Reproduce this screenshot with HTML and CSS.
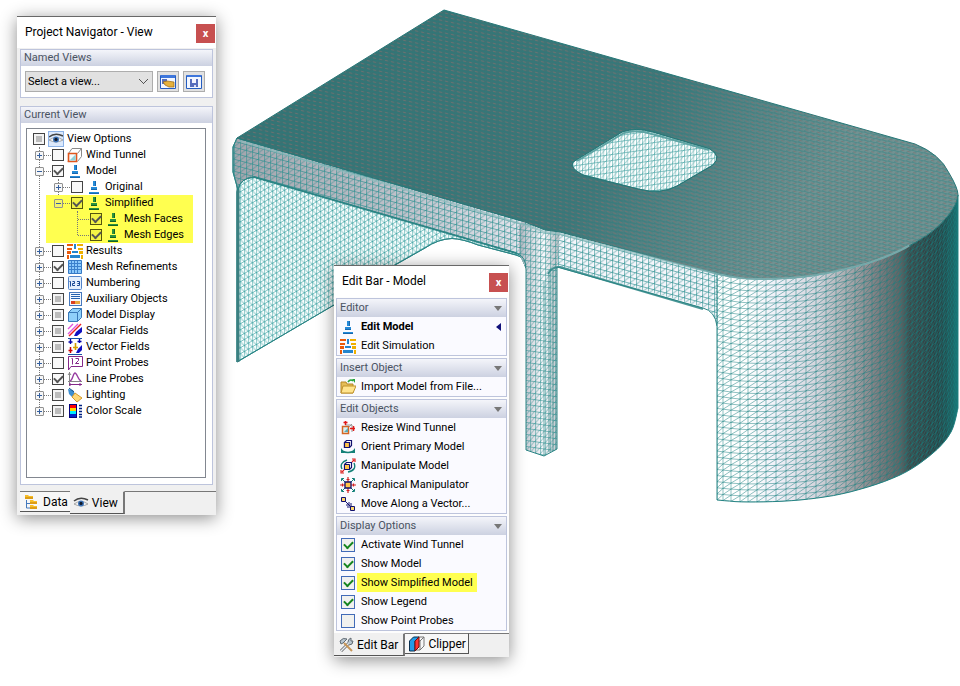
FILE: index.html
```html
<!DOCTYPE html>
<html lang="en">
<head>
<meta charset="utf-8">
<title>Simplified Model View</title>
<link rel="stylesheet" href="styles.css">
</head>
<body>
<svg width="0" height="0" class="sprite" aria-hidden="true">
  <symbol id="eye" viewBox="0 0 16 16"><path d="M1 6Q7 1 15 5" stroke="#444" stroke-width="1.600" fill="none"/><path d="M1 9Q8 4 15 9Q8 13 1 9Z" fill="#f2f2f2" stroke="#888" stroke-width=".7"/><circle cx="8" cy="8.600" r="3" fill="#3c73b8"/><circle cx="8" cy="8.400" r="1.600" fill="#101828"/></symbol>
  <symbol id="tunnel" viewBox="0 0 16 16"><path d="M5 1.500h9.500v8l-4 5M5 10.500l-4 4M10.500 6.500l4-5M1.500 6.500L5 1.500" fill="none" stroke="#8a8a8a"/><path d="M1.500 6.500h8v8h-8z" fill="#f4fbfc" stroke="#e0561c" stroke-width="1.600"/><path d="M2.500 13.500l6-6v6z" fill="#8ed0d8"/></symbol>
  <symbol id="model" viewBox="0 0 16 16"><path d="M7 2h2v5H7zM5 8h6v3H5zM3 13h10v2H3z" fill="#258bd8"/><path d="M9 2h1v5H9zM5 10h6v1H5zM3 14h10v1H3z" fill="#1767ae"/></symbol>
  <symbol id="mesh" viewBox="0 0 16 16"><path d="M7 2h2v5H7zM5 8h6v3H5zM3 13h10v2H3z" fill="#2a913d"/><path d="M9 2h1v5H9zM5 10h6v1H5zM3 14h10v1H3z" fill="#146125"/></symbol>
  <symbol id="results" viewBox="0 0 16 16"><path d="M0 1h6v2H0zM0 5h5v2H0zM0 8h4v3H0zM0 12h2v4H0z" fill="#ea5a0b"/><path d="M10 1h6v2h-6zM11 5h5v2h-5zM12 8h4v3h-4zM14 12h2v4h-2z" fill="#efb000"/><path d="M7 1h2v5H7zM5 8h6v2H5zM3 12h10v3H3z" fill="#2585ce"/></symbol>
  <symbol id="grid" viewBox="0 0 16 16"><path d="M1.500 1.500h13v13h-13z" fill="#8ac8fb" stroke="#3579c5"/><path d="M4.500 2v12M7.500 2v12M10.500 2v12M1 4.500h14M1 7.500h14M1 10.500h14" stroke="#3a80cc"/></symbol>
  <symbol id="numbers" viewBox="0 0 16 16"><rect x="1.500" y="1.500" width="13" height="13" rx="1" fill="#e3effd" stroke="#5384ca"/><path d="M2.500 6.500h1v5M5.500 6.500h2v2h-2v2h2.500M10 6.500h2.500v4H10M10.500 8.500h2" fill="none" stroke="#1b4994"/></symbol>
  <symbol id="sheet" viewBox="0 0 16 16"><rect x="2.500" y="1.500" width="12" height="13" fill="#f4f8ff" stroke="#4779bd"/><path d="M4 3.500h9M4 5.500h9M4 7.500h9" stroke="#2461af"/><path d="M4 10h4v3H4z" fill="#db3f20"/><path d="M8 10h5v3H8z" fill="#e9a840"/></symbol>
  <symbol id="cube" viewBox="0 0 16 16"><path d="M1.500 5.500l4-4h9v9l-4 4h-9z" fill="#8fd0fa" stroke="#3979b8"/><path d="M1.500 5.500h9v9M10.500 5.500l4-4" fill="none" stroke="#3979b8"/></symbol>
  <symbol id="scalar" viewBox="0 0 16 16"><path d="M1 6l5-5M1 11L11 1" stroke="#df55db" stroke-width="1.400"/><path d="M2 13L14 1" stroke="#e22" stroke-width="1.400"/><path d="M15 4v5l-5 4H7l2-4z" fill="#1010c0"/><path d="M1 15.500h14" stroke="#1853a4"/></symbol>
  <symbol id="vector" viewBox="0 0 16 16"><path d="M3.500 0v5M1.500 3h4M12.500 0v4M10.500 2.500h4" stroke="#00a" stroke-width="1.400"/><path d="M3.500 8v6M1.500 11.500h4" stroke="#c00" stroke-width="1.500"/><path d="M8.500 4v7M6 8.500h5" stroke="#d2a000" stroke-width="1.600"/><path d="M15 6v5l-3 3H9l2-4z" fill="#1010c0"/><path d="M1 15.500h14" stroke="#1853a4"/></symbol>
  <symbol id="point" viewBox="0 0 16 16"><path d="M1.500 15V1.500h14v10H4z" fill="#fff" stroke="#852889"/><path d="M4.500 3.500h1v6M8.500 3.500h3v2l-3 3h3.500" fill="none" stroke="#852889"/></symbol>
  <symbol id="line" viewBox="0 0 16 16"><path d="M2.500 1v14M1 10.500h14M1 4l1.500-2L4 4" stroke="#888" fill="none"/><path d="M3 10C6 9 6 2 8 2s3 7 6 8" fill="none" stroke="#963ba0" stroke-width="1.300"/><path d="M2 13.500h13M3 12v3M13 12v3" stroke="#852889"/></symbol>
  <symbol id="light" viewBox="0 0 16 16"><path d="M1 2l5 1 2 4-3 3-3-3z" fill="#3d8fd2"/><path d="M2 1l5 4" stroke="#175287"/><path d="M8 6l7 5-5 4-5-5z" fill="#ffd878" stroke="#d4992c"/></symbol>
  <symbol id="scale" viewBox="0 0 16 16"><path d="M2 1h8v14H2z" fill="#02027c"/><path d="M3 2h6v3H3z" fill="red"/><path d="M3 5h6v3H3z" fill="#ffd800"/><path d="M3 8h6v3H3z" fill="#0ef"/><path d="M3 11h6v3H3z" fill="#02c"/><path d="M12 2.500h3M12 5.500h3M12 8.500h3M12 11.500h3M12 14h3" stroke="#002080" stroke-width="1.400"/></symbol>
  <symbol id="folder" viewBox="0 0 16 16"><path d="M1 3h5l1 2h6v9H1z" fill="#e5bd57" stroke="#b58924"/><path d="M3 7h13l-3 7H1z" fill="#ffe48d" stroke="#bf922d"/><path d="M8 3c2-3 4-2 5-1" fill="none" stroke="#25a33a" stroke-width="1.600"/><path d="M12 0h3v4z" fill="#25a33a"/></symbol>
  <symbol id="resize" viewBox="0 0 16 16"><path d="M2.500 6.500h6v7h-6z" fill="#d9f0f2" stroke="#d46524" stroke-width="1.500"/><path d="M4 12l4-4v4z" fill="#5caab5"/><path d="M5 5h7v7M9 7l3-3" fill="none" stroke="#999"/><path d="M5.500 5V1M3.500 2.500h4M10 8.500h5M13.500 6v5" fill="none" stroke="#e01818" stroke-width="1.500"/></symbol>
  <symbol id="orient" viewBox="0 0 16 16"><path d="M4.500 3.500l2-2h5v5l-2 2h-5z" fill="#fff" stroke="#11116f" stroke-width="1.200"/><path d="M4.500 3.500h5v5h-5z" fill="#ffc54a" stroke="#11116f" stroke-width="1.200"/><path d="M2 12q6 3 12 0" fill="none" stroke="#138078" stroke-width="1.400"/><path d="M1 9v5h4zM15 9v5h-4z" fill="#138078"/></symbol>
  <symbol id="rotate" viewBox="0 0 16 16"><path d="M4.500 6.500l2-2h5v5l-2 2h-5z" fill="#fff" stroke="#11116f" stroke-width="1.200"/><path d="M4.500 6.500h5v5h-5z" fill="#ffc54a" stroke="#11116f"/><path d="M2 11Q-1 5 7 2M14 5q3 7-6 9" fill="none" stroke="#138078" stroke-width="1.400"/><path d="M12 4l2-2M12 1h3v3M4 12l-2 2M1 12v3h3" fill="none" stroke="#d22" stroke-width="1.200"/></symbol>
  <symbol id="graph" viewBox="0 0 16 16"><path d="M8 0v16M0 8h16M6.500 2.500h3M6.500 13.500h3M2.500 6.500v3M13.500 6.500v3" fill="none" stroke="#d32020" stroke-width="1.200"/><path d="M2 2l12 12M14 2L2 14M1.500 4V1.500H4M12 1.500h2.500V4M1.500 12v2.500H4M12 14.500h2.500V12" fill="none" stroke="#138078"/><path d="M5 5h6v6H5z" fill="#ffc54a" stroke="#11116f" stroke-width="1.300"/></symbol>
  <symbol id="move" viewBox="0 0 16 16"><path d="M5 5l7 7M6 9h3V6M7 11h4V7" stroke="#11116f" fill="none"/><path d="M1.500 1.500h4v4h-4zM10.500 10.500h4v4h-4z" fill="#ffd56a" stroke="#11116f"/></symbol>
  <symbol id="datatree" viewBox="0 0 16 16"><path d="M2.500 6v8h4M2.500 9.500h4" fill="none" stroke="#4379bd"/><path d="M1 1h3l1 1h4v3H1zM6 6h3l1 1h3v3H6zM6 11h3l1 1h3v3H6z" fill="#f7bd27"/><path d="M1 3h8v2H1zM6 8h7v2H6zM6 13h7v2H6z" fill="#dc9d15"/></symbol>
  <symbol id="tools" viewBox="0 0 16 16"><path d="M3 14L12 5" stroke="#666" stroke-width="3"/><path d="M3 14L12 5" stroke="#e8eef3" stroke-width="1.400"/><path d="M10 5q0-3 3-4v3h2q0 4-4 4M2 4q3-4 7-2L6 5 5 6 3 7z" fill="#b8c5cf" stroke="#626b72"/><path d="M6 6l8 8" stroke="#c69557" stroke-width="2"/></symbol>
  <symbol id="clip" viewBox="0 0 16 16"><path d="M9 1h6v9l-4 4H5M11 14V5l4-4M11 5H6" fill="none" stroke="#777"/><path d="M.5 5l4-4H10L6 5v10H.5z" fill="#229be8" stroke="#082e4d"/><path d="M6 5l4-4v10l-4 4z" fill="#f33" stroke="#6f1010"/></symbol>
  <symbol id="manage" viewBox="0 0 16 16"><path d="M.5 1.500h15v13H.5z" fill="#f3f7ff" stroke="#245cc0"/><path d="M1 1h14v3H1z" fill="#3e76dc"/><path d="M2 5h5v5H2z" fill="#566fbd"/><path d="M3 8l4-1 7 1v5H9l-4-2z" fill="#e6b13c" stroke="#946514" stroke-width=".7"/></symbol>
  <symbol id="save" viewBox="0 0 16 16"><path d="M.5 1.500h15v13H.5z" fill="#f3f7ff" stroke="#245cc0"/><path d="M1 1h14v2H1z" fill="#3e76dc"/><path d="M4 5h8v8H4z" fill="#586dbc"/><path d="M6 5h4v4H6z" fill="#f5f5ff"/><path d="M8 11h2v2H8z" fill="#d9ddf4"/></symbol>
</svg>

<main class="desktop">
  <svg class="model" viewBox="0 0 960 686" role="img" aria-label="Meshed table model">
    <defs>
      <pattern id="topMesh" width="6" height="4" patternUnits="userSpaceOnUse" patternTransform="skewY(12)">
        <path d="M0 .5h6M0 4L6 0" stroke="#1f7f7f" opacity=".4"/><path d="M1 2.500h3" stroke="#8a7170" opacity=".6"/>
      </pattern>
      <pattern id="bandMesh" width="6" height="6" patternUnits="userSpaceOnUse" patternTransform="skewY(15)">
        <path d="M.5 0v6M0 .5h6M0 6L6 0" stroke="#2b8f8f" stroke-width=".7" opacity=".85" fill="none"/>
      </pattern>
      <pattern id="legMesh" width="5" height="6" patternUnits="userSpaceOnUse" patternTransform="skewY(8)">
        <path d="M.5 0v6M0 .5h5M0 6L5 0" stroke="#2b8f8f" stroke-width=".7" opacity=".75" fill="none"/>
      </pattern>
      <pattern id="wallMesh" width="4" height="6" patternUnits="userSpaceOnUse" patternTransform="skewY(-30)">
        <path d="M.5 0v6M0 .5h4M0 0L4 6" stroke="#2f9b9b" stroke-width=".6" opacity=".9" fill="none"/>
      </pattern>
      <pattern id="holeMesh" width="6" height="6" patternUnits="userSpaceOnUse" patternTransform="skewY(-8)">
        <path d="M.5 0v6M0 .5h6M0 6L6 0M3.500 0v6" stroke="#2f9797" stroke-width=".5" fill="none"/>
      </pattern>
      <linearGradient id="topShade" gradientUnits="userSpaceOnUse" x1="350" y1="60" x2="720" y2="320"><stop stop-color="#3a7172"/><stop offset=".6" stop-color="#437577"/><stop offset="1" stop-color="#729292"/></linearGradient>
      <linearGradient id="bandShade"><stop stop-color="#a4a5ad"/><stop offset=".6" stop-color="#c2c3cc"/><stop offset="1" stop-color="#e6e6ee"/></linearGradient>
      <linearGradient id="legShade"><stop stop-color="#b2b5be"/><stop offset=".25" stop-color="#d2d4db"/><stop offset=".6" stop-color="#fafafd"/><stop offset="1" stop-color="#b4b8be"/></linearGradient>
      <linearGradient id="drumShade"><stop stop-color="#fff"/><stop offset=".12" stop-color="#fff"/><stop offset=".25" stop-color="#f0f0f8"/><stop offset=".42" stop-color="#d4d4dc"/><stop offset=".54" stop-color="#ababaf"/><stop offset=".66" stop-color="#808083"/><stop offset=".76" stop-color="#606465"/><stop offset=".8" stop-color="#3f4a4b"/><stop offset=".92" stop-color="#2d3e40"/><stop offset="1" stop-color="#1d5c5c"/></linearGradient>
      <clipPath id="drumClip"><path id="drumShape" d=""/></clipPath>
    </defs>
    <g stroke="#2b8585" stroke-linejoin="round">
      <path d="M237 362V192Q238 178 254 177L408 220 520 254 526 268Q525 257 516 255L478 245Q463 239 452 238.500 438 239 425 248L395 265 334 305Z" fill="#fbffff"/>
      <path d="M237 362V192Q238 178 254 177L408 220 520 254 526 268Q525 257 516 255L478 245Q463 239 452 238.500 438 239 425 248L395 265 334 305Z" fill="url(#wallMesh)"/>
      <path d="M238 362V176" stroke="#3b7f80" stroke-width="3"/>
      <path d="M237 138L526 222V262Q525 257 516 253L254 177Q240 178 238 190L233 172V147Z" fill="url(#bandShade)"/>
      <path d="M237 138L526 222V262Q525 257 516 253L254 177Q240 178 238 190L233 172V147Z" fill="url(#bandMesh)"/>
      <g stroke="none">
        <path d="M545 226L717 272V326Q715 311 703 307L558 266Q548 268 544 282Z" fill="#f6f6fb"/>
        <path d="M545 226L717 272V326Q715 311 703 307L558 266Q548 268 544 282Z" fill="url(#bandMesh)"/>
        <path d="M523 220L560 229 557 268V449L544 456 526 450V268L519 254V226Z" fill="url(#legShade)"/>
        <path d="M523 220L560 229 557 268V449L544 456 526 450V268L519 254V226Z" fill="url(#legMesh)"/>
      </g>
      <path d="M518 254Q526 257 526 270V450L544 456 557 449V267L703 308Q715 311 717 326" fill="none"/>
      <path d="M544 282V455M549 272V452M553 270V451" fill="none" stroke-width=".7"/>
      <path d="M548 274Q552 266 560 267L703 309M254 177L516 253" fill="none" stroke-width="2" opacity=".85"/>
    </g>
    <use href="#drumShape" fill="url(#drumShade)" stroke="#2b8585"/>
    <path id="drumMesh" d="" clip-path="url(#drumClip)" fill="none" stroke="#1b8080" stroke-width=".5"/>
    <g stroke="#277777" stroke-linejoin="round">
      <path class="slab" fill-rule="evenodd" d="" fill="url(#topShade)"/>
      <path class="slab" fill-rule="evenodd" d="" fill="url(#topMesh)" stroke="none"/>
      <path d="M573 162Q569 168 583 175L638 189Q661 195 677 186L713 165Q722 156 710 149L653 132Q636 127 622 132Z" fill="url(#holeMesh)"/>
      <path d="M577 161L624 133Q637 129 652 134L709 150" fill="none" stroke="#5fa4a4" stroke-width="2"/>
    </g>
    <path class="rim" d="" fill="none" stroke="#8fbcbe" stroke-width="2" opacity=".7"/>
  </svg>

  <section class="window navigator" aria-label="Project Navigator">
    <header class="titlebar"><h1>Project Navigator - View</h1><button class="close" aria-label="Close navigator">x</button></header>
    <div class="nav-body">
      <section class="group">
        <h2>Named Views</h2>
        <div class="view-tools">
          <select aria-label="Named view"><option>Select a view...</option></select>
          <button class="tool" aria-label="Manage views"><svg><use href="#manage"/></svg></button>
          <button class="tool" aria-label="Save view"><svg><use href="#save"/></svg></button>
        </div>
      </section>
      <section class="group current">
        <h2>Current View</h2>
        <div class="tree">
          <label class="root"><input type="checkbox" class="mixed"><svg class="selected"><use href="#eye"/></svg>View Options</label>
          <ul>
            <li><div class="node"><button class="plus" aria-label="Expand Wind Tunnel"></button><label><input type="checkbox"><svg><use href="#tunnel"/></svg>Wind Tunnel</label></div></li>
            <li><div class="node"><button class="minus" aria-label="Collapse Model"></button><label><input type="checkbox" checked><svg><use href="#model"/></svg>Model</label></div>
              <ul class="branch">
                <li><div class="node"><button class="plus" aria-label="Expand Original"></button><label><input type="checkbox"><svg><use href="#model"/></svg>Original</label></div></li>
                <li class="marked"><div class="node"><button class="minus" aria-label="Collapse Simplified"></button><label><input type="checkbox" checked><svg><use href="#mesh"/></svg>Simplified</label></div>
                  <ul class="leaves">
                    <li><div class="node"><label><input type="checkbox" checked><svg><use href="#mesh"/></svg>Mesh Faces</label></div></li>
                    <li><div class="node"><label><input type="checkbox" checked><svg><use href="#mesh"/></svg>Mesh Edges</label></div></li>
                  </ul>
                </li>
              </ul>
            </li>
            <li><div class="node"><button class="plus" aria-label="Expand Results"></button><label><input type="checkbox"><svg><use href="#results"/></svg>Results</label></div></li>
            <li><div class="node"><button class="plus" aria-label="Expand Mesh Refinements"></button><label><input type="checkbox" checked><svg><use href="#grid"/></svg>Mesh Refinements</label></div></li>
            <li><div class="node"><button class="plus" aria-label="Expand Numbering"></button><label><input type="checkbox"><svg><use href="#numbers"/></svg>Numbering</label></div></li>
            <li><div class="node"><button class="plus" aria-label="Expand Auxiliary Objects"></button><label><input type="checkbox" class="mixed"><svg><use href="#sheet"/></svg>Auxiliary Objects</label></div></li>
            <li><div class="node"><button class="plus" aria-label="Expand Model Display"></button><label><input type="checkbox" class="mixed"><svg><use href="#cube"/></svg>Model Display</label></div></li>
            <li><div class="node"><button class="plus" aria-label="Expand Scalar Fields"></button><label><input type="checkbox" class="mixed"><svg><use href="#scalar"/></svg>Scalar Fields</label></div></li>
            <li><div class="node"><button class="plus" aria-label="Expand Vector Fields"></button><label><input type="checkbox" class="mixed"><svg><use href="#vector"/></svg>Vector Fields</label></div></li>
            <li><div class="node"><button class="plus" aria-label="Expand Point Probes"></button><label><input type="checkbox"><svg><use href="#point"/></svg>Point Probes</label></div></li>
            <li><div class="node"><button class="plus" aria-label="Expand Line Probes"></button><label><input type="checkbox" checked><svg><use href="#line"/></svg>Line Probes</label></div></li>
            <li><div class="node"><button class="plus" aria-label="Expand Lighting"></button><label><input type="checkbox" class="mixed"><svg><use href="#light"/></svg>Lighting</label></div></li>
            <li><div class="node"><button class="plus" aria-label="Expand Color Scale"></button><label><input type="checkbox" class="mixed"><svg><use href="#scale"/></svg>Color Scale</label></div></li>
          </ul>
        </div>
      </section>
    </div>
    <nav class="tabs"><button class="tab"><svg><use href="#datatree"/></svg>Data</button><button class="tab active"><svg><use href="#eye"/></svg>View</button><span class="rail"></span></nav>
  </section>

  <section class="window editbar" aria-label="Edit Bar">
    <header class="titlebar"><h1>Edit Bar - Model</h1><button class="close" aria-label="Close edit bar">x</button></header>
    <div class="edit-body">
      <section class="group">
        <h2><button>Editor<span class="caret"></span></button></h2>
        <button class="item current-item"><svg><use href="#model"/></svg>Edit Model<span class="pointer"></span></button>
        <button class="item"><svg><use href="#results"/></svg>Edit Simulation</button>
      </section>
      <section class="group">
        <h2><button>Insert Object<span class="caret"></span></button></h2>
        <button class="item"><svg><use href="#folder"/></svg>Import Model from File...</button>
      </section>
      <section class="group">
        <h2><button>Edit Objects<span class="caret"></span></button></h2>
        <button class="item"><svg><use href="#resize"/></svg>Resize Wind Tunnel</button>
        <button class="item"><svg><use href="#orient"/></svg>Orient Primary Model</button>
        <button class="item"><svg><use href="#rotate"/></svg>Manipulate Model</button>
        <button class="item"><svg><use href="#graph"/></svg>Graphical Manipulator</button>
        <button class="item"><svg><use href="#move"/></svg>Move Along a Vector...</button>
      </section>
      <section class="group">
        <h2><button>Display Options<span class="caret"></span></button></h2>
        <label class="option"><input type="checkbox" checked><span>Activate Wind Tunnel</span></label>
        <label class="option"><input type="checkbox" checked><span>Show Model</span></label>
        <label class="option"><input type="checkbox" checked><span class="glow">Show Simplified Model</span></label>
        <label class="option"><input type="checkbox" checked><span>Show Legend</span></label>
        <label class="option"><input type="checkbox"><span>Show Point Probes</span></label>
      </section>
    </div>
    <nav class="tabs"><button class="tab active"><svg><use href="#tools"/></svg>Edit Bar</button><button class="tab boxed"><svg><use href="#clip"/></svg>Clipper</button><span class="rail"></span></nav>
  </section>
</main>
<script src="mesh.js"></script>
</body>
</html>
```
FILE: styles.css
```css
* { box-sizing: border-box; }
body { margin: 0; background: #fff; color: #000; font: 11px/16px Roboto, "Noto Sans", sans-serif; }
button, select { font: inherit; color: inherit; margin: 0; padding: 0; border: 0; background: none; }
h1, h2, ul { margin: 0; padding: 0; font-size: 11px; font-weight: 400; }
h1 { font-size: 12px; }
ul { list-style: none; }
svg { flex: none; width: 16px; height: 16px; }
.sprite { position: absolute; width: 0; height: 0; }
.desktop { position: relative; min-height: 100vh; overflow: hidden; }
.model { display: block; width: 100%; height: auto; }

.window { position: absolute; background: #f0f0f0; border-top: 1px solid #686868; box-shadow: 0 3px 16px rgba(0, 0, 0, .45); }
.navigator { left: 17px; top: 16px; width: 199px; }
.editbar { left: 334px; top: 265px; width: 175px; }
.titlebar { display: flex; align-items: flex-start; justify-content: space-between; height: 31px; padding: 7px 1px 0 8px; background: #fff; }
.close { width: 19px; height: 19px; background: #c75050; color: #fff; font-weight: 700; line-height: 16px; }

.group { border: 1px solid #bdc4dc; background: #fff; }
h2 { padding: 0 3px; color: #4a5362; background: linear-gradient(#f4f5fa, #ccd1e1); line-height: 16px; }
.nav-body { display: grid; gap: 8px; padding: 1px 3px 6px; }
.view-tools { display: flex; gap: 4px; height: 31px; padding: 5px 7px 5px 4px; }
.view-tools select { flex: 1; min-width: 0; appearance: none; border: 1px solid #adadad; padding: 0 2px; background: #e1e1e1; background-image: linear-gradient(45deg, transparent 45%, #555 45% 58%, transparent 58%), linear-gradient(-45deg, transparent 45%, #555 45% 58%, transparent 58%); background-size: 5px 5px; background-repeat: no-repeat; background-position: right 8px center, right 4px center; }
.tool { display: grid; place-items: center; width: 22px; height: 21px; border: 1px solid #adadad; background: #e1e1e1; }
.current { min-height: 379px; display: flex; flex-direction: column; }
.tree { flex: 1; margin: 5px 6px 6px 5px; border: 1px solid #828790; padding: 2px 0 0 6px; }
.root, .node, .node label { display: flex; align-items: center; height: 16px; }
.root svg, .node svg { margin: 0 3px; }
.root svg { background: #dce9fb; outline: 1px solid #8cb2e6; outline-offset: -1px; }
.tree input { appearance: none; flex: none; width: 12px; height: 12px; margin: 0; border: 1px solid #444; background: #f8f8f8; }
.tree input.mixed { background: #bcbcbc; box-shadow: inset 0 0 0 2px #f4f4f4; }
.tree input:checked { display: grid; place-items: center; }
.tree input:checked::before { content: ""; width: 7px; height: 4px; border: solid #555; border-width: 0 0 2px 2px; transform: translateY(-1px) rotate(-45deg); }
.tree ul { position: relative; padding-left: 2px; }
.tree ul ul { padding-left: 19px; }
.tree ul::before { content: ""; position: absolute; left: 6px; top: 0; bottom: 8px; border-left: 1px dotted #777; }
.tree ul ul::before { left: 23px; }
.tree .branch::before { bottom: 40px; }
.node button { position: relative; flex: none; width: 9px; height: 9px; border: 1px solid #919191; border-radius: 1px; background: linear-gradient(#345f9e, #345f9e) center / 5px 1px no-repeat, #f6f6f6; }
.node .plus { background: linear-gradient(#345f9e, #345f9e) center / 5px 1px no-repeat, linear-gradient(#345f9e, #345f9e) center / 1px 5px no-repeat, #f6f6f6; }
.node::before { content: ""; order: 1; width: 7px; border-top: 1px dotted #777; }
.node label { order: 2; margin-left: 1px; }
.leaves .node::before { width: 11px; margin-left: 5px; }
.tree .marked { position: relative; margin: 0 12px 0 -8px; padding-left: 8px; background: #ffff50; }
.marked input { background: #f3f345; border-color: #55550e; }
.marked .minus { background-color: #f3f36a; }

.tabs { display: flex; align-items: flex-start; height: 24px; font-size: 12px; }
.tab { display: flex; align-items: center; gap: 3px; height: 21px; padding: 0 2px 0 4px; border-top: 1px solid #777; border-bottom: 1px solid #555; background: #f7f7f7; white-space: nowrap; }
.tab.active { height: 23px; padding: 0 5px 0 3px; border-top-color: transparent; border-right: 2px solid #777; background: #f0f0f0; }
.rail { flex: 1; border-top: 1px solid #777; }
.navigator .tab:first-child { margin-left: 3px; }

.edit-body { display: grid; gap: 2px; padding: 1px 2px 2px; background: #fdfdfd; }
.editbar .group { background: #fafaff; }
.editbar h2 button { display: flex; align-items: center; justify-content: space-between; width: 100%; height: 18px; }
.caret { border: 4px solid transparent; border-top: 5px solid #777; border-bottom: 0; margin-right: 1px; }
.item, .option { display: flex; align-items: center; width: 100%; height: 19px; padding: 0 5px 0 3px; gap: 5px; white-space: nowrap; }
.current-item { font-weight: 700; }
.pointer { margin-left: auto; border: 4px solid transparent; border-right: 5px solid #10107a; border-left: 0; }
.option { gap: 2px; padding-left: 4px; }
.option input { appearance: none; display: grid; place-items: center; width: 14px; height: 14px; margin: 0; border: 1px solid #426bb8; background: #f1f1ef; }
.option input:checked::before { content: ""; width: 7px; height: 4px; border: solid #16851f; border-width: 0 0 2px 2px; transform: translateY(-1px) rotate(-45deg); }
.option span { padding: 1px 4px; line-height: 17px; }
.glow { background: #ffff50; }
.editbar .tab.active { padding: 0 5px 0 4px; }
.tab.boxed { border-right: 1px solid #555; }
```
FILE: mesh.js
```js
// Catmull-Rom subdivision keeps the rounded end of the slab smooth.
const smooth = pts => {
  const out = [];
  for (let i = 0; i < pts.length - 1; i++) {
    const p0 = pts[Math.max(i - 1, 0)], p1 = pts[i], p2 = pts[i + 1], p3 = pts[Math.min(i + 2, pts.length - 1)];
    for (let k = 0; k < 6; k++) {
      const t = k / 6;
      out.push([0, 1].map(c => 0.5 * (2 * p1[c] + (p2[c] - p0[c]) * t + (2 * p0[c] - 5 * p1[c] + 4 * p2[c] - p3[c]) * t * t + (3 * p1[c] - p0[c] - 3 * p2[c] + p3[c]) * t * t * t)));
    }
  }
  out.push(pts[pts.length - 1]);
  return out;
};
const path = pts => pts.map(p => p[0].toFixed(1) + " " + p[1].toFixed(1)).join("L");
const rim = smooth([[717,274],[740,278],[770,279],[810,276],[850,268],[880,259],[905,248],[930,233],[946,218],[955,205],[958,195]]);
const bottom = smooth([[717,500],[748,502],[800,500],[850,492],[900,475],[933,453],[951,432],[958,408]]);
const at = (curve, x) => {
  let i = 1;
  while (i < curve.length - 1 && curve[i][0] < x) i++;
  const [ax, ay] = curve[i - 1], [bx, by] = curve[i];
  return ay + (by - ay) * (x - ax) / (bx - ax);
};
const xs = [717, 723, 731, 740, 748, 757, 766, 776, 786, 796, 806, 816, 826, 836, 846, 855, 864, 872, 880, 887, 894, 900, 906, 912, 917, 922, 927, 932, 936, 940, 944, 948, 951, 954, 956, 958];
const rows = 37;
const point = (x, r) => {
  const a = at(rim, x), b = at(bottom, x);
  return x + " " + (a + (b - a) * r / rows).toFixed(1);
};
let d = "";
for (const x of xs) d += "M" + point(x, 0) + "L" + point(x, rows);
for (let r = 0; r <= rows; r++) d += "M" + xs.map(x => point(x, r)).join("L");
for (let i = 1; i < xs.length; i++)
  for (let r = 1; r <= rows; r++)
    d += "M" + point(xs[i - 1], r) + "L" + point(xs[i], r - 1);
document.getElementById("drumMesh").setAttribute("d", d);
document.getElementById("drumShape").setAttribute("d", "M" + path(rim) + "L" + path(bottom.slice().reverse()) + "Z");

const hole = "M573 162Q569 168 583 175L638 189Q661 195 677 186L713 165Q722 156 710 149L653 132Q636 127 622 132Z";
const slab = "M237 138L444 10 915 144Q940 154 949 173 958 188 958 195L" + path(rim.slice().reverse()) + "L560 232 545 230 525 222Z" + hole;
document.querySelectorAll(".slab").forEach(e => e.setAttribute("d", slab));
document.querySelector(".rim").setAttribute("d", "M240 141L525 225 545 232 560 234L" + path(rim.slice(0, 38)));
```
